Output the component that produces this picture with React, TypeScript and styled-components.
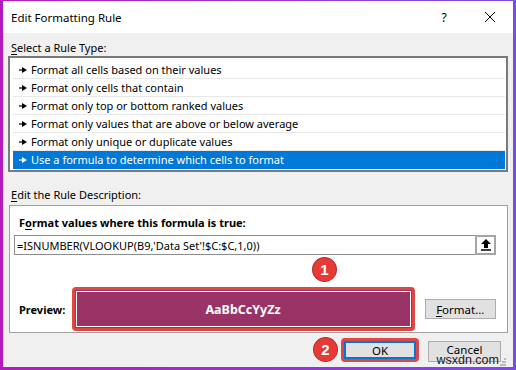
import React from "react";
import styled, { createGlobalStyle } from "styled-components";

const GlobalStyle = createGlobalStyle`
  html, body {
    margin: 0;
    padding: 0;
  }
  body {
    width: 516px;
    height: 370px;
    overflow: hidden;
    font-family: "Segoe UI", "Noto Sans", sans-serif;
    font-size: 11px;
    color: #000;
  }
`;

const Frame = styled.div`
  width: 516px;
  height: 370px;
  box-sizing: border-box;
  padding: 1px 3px 3px 3px;
  background: linear-gradient(90deg, #b41bbb 0%, #9c31cf 50%, #7b4be6 100%);
  display: flex;
`;

const Dialog = styled.div`
  flex: 1;
  display: flex;
  flex-direction: column;
  background: #f0f0f0;
  position: relative;
  overflow: hidden;
`;

const TitleBar = styled.div`
  height: 32px;
  background: #fff;
  display: flex;
  align-items: center;
  padding-left: 8px;
`;

const Title = styled.div`
  flex: 1;
  font-size: 11.5px;
`;

const CaptionButton = styled.div`
  width: 46px;
  height: 32px;
  display: flex;
  align-items: center;
  justify-content: center;
  font-size: 12px;
`;

const Body = styled.div`
  display: flex;
  flex-direction: column;
  padding: 0 5px;
`;

const SectionLabel = styled.div<{ $top: number }>`
  margin-top: ${(p) => p.$top}px;
  line-height: 15px;
  padding-left: 3px;
  u {
    text-decoration: underline;
    text-underline-offset: 2px;
  }
`;

const ListBox = styled.div`
  margin-top: 1px;
  border: 2px solid #7a7a7a;
  background: #fff;
  padding: 3px 1px 1px 3px;
  display: flex;
  flex-direction: column;
`;

const Row = styled.div<{ $selected?: boolean }>`
  height: 18px;
  box-sizing: border-box;
  display: flex;
  align-items: center;
  gap: 4px;
  padding-left: 6px;
  border-bottom: 1px solid ${(p) => (p.$selected ? "#0078d7" : "#e8e8e8")};
  background: ${(p) => (p.$selected ? "#0078d7" : "transparent")};
  color: ${(p) => (p.$selected ? "#fff" : "#000")};
  white-space: nowrap;
`;

const DescBox = styled.div`
  margin: 3px 0 0 1px;
  height: 128px;
  box-sizing: border-box;
  border: 1px solid #a0a0a0;
  background: #fff;
  padding: 9px 11px 0 4px;
  display: flex;
  flex-direction: column;
`;

const Heading = styled.div`
  font-weight: bold;
  line-height: 15px;
  padding-left: 5px;
  u {
    text-decoration: underline;
    text-underline-offset: 2px;
  }
`;

const FormulaRow = styled.div`
  margin-top: 5px;
  display: flex;
  height: 20px;
`;

const FormulaInput = styled.div`
  flex: 1;
  box-sizing: border-box;
  border: 1px solid #8c8c8c;
  border-right: none;
  padding-left: 2px;
  display: flex;
  align-items: center;
  white-space: nowrap;
`;

const CollapseButton = styled.div`
  width: 21px;
  box-sizing: border-box;
  border: 2px solid #a6a6a6;
  background: #fdfdfd;
  display: flex;
  align-items: center;
  justify-content: center;
`;

const PreviewRow = styled.div`
  margin-top: 32px;
  display: flex;
  align-items: center;
`;

const PreviewLabel = styled.div`
  width: 58px;
  box-sizing: border-box;
  padding-left: 5px;
  font-weight: bold;
`;

const Highlight = styled.div`
  border: 3px solid #de4744;
  border-radius: 4px;
  display: flex;
`;

const Swatch = styled.div`
  width: 335px;
  height: 36px;
  box-sizing: border-box;
  border: 1px solid #fff;
  outline: 1px solid #993366;
  margin: 1px;
  background: #993366;
  color: #fff;
  font-weight: bold;
  font-size: 12.5px;
  display: flex;
  align-items: center;
  justify-content: center;
`;

const Button = styled.div<{ $default?: boolean; $width: number; $height: number }>`
  width: ${(p) => p.$width}px;
  height: ${(p) => p.$height}px;
  box-sizing: border-box;
  border: ${(p) => (p.$default ? "2px solid #0078d7" : "1px solid #adadad")};
  background: #e1e1e1;
  display: flex;
  align-items: center;
  justify-content: center;
  font-size: 11.5px;
  u {
    text-decoration: underline;
    text-underline-offset: 2px;
  }
`;

const FormatButton = styled(Button)`
  margin-left: 10px;
`;

const Footer = styled.div`
  margin-top: 5px;
  display: flex;
  justify-content: flex-end;
  align-items: flex-start;
  gap: 9px;
  padding-right: 7px;
`;

const CancelButton = styled(Button)`
  margin-top: 3px;
  align-items: flex-start;
  line-height: 14px;
  padding-top: 1px;
`;

const Badge = styled.div<{ $left: number; $top: number }>`
  position: absolute;
  left: ${(p) => p.$left}px;
  top: ${(p) => p.$top}px;
  width: 23px;
  height: 23px;
  border-radius: 50%;
  background: #e53a36;
  box-shadow: 0 0 0 1px #b92a27;
  color: #fff;
  font-family: "Liberation Sans", Arial, sans-serif;
  font-weight: bold;
  font-size: 15px;
  display: flex;
  align-items: center;
  justify-content: center;
`;

const Watermark = styled.div`
  position: absolute;
  right: 7px;
  bottom: 1px;
  font-family: "Liberation Sans", Arial, sans-serif;
  font-size: 12.5px;
  line-height: 12px;
  color: #1c1c1c;
  display: flex;
  align-items: flex-end;
  gap: 1px;
`;

const Bullet = () => (
  <svg width="8" height="6" viewBox="0 0 8 6">
    <path d="M0 3H4" stroke="currentColor" strokeWidth="1.2" />
    <path d="M3 0L8 3L3 6Z" fill="currentColor" />
  </svg>
);

const UpArrow = () => (
  <svg width="10" height="12" viewBox="0 0 10 12">
    <path d="M5 0L10 5H7V9H3V5H0Z" fill="#000" />
    <path d="M0 11H10" stroke="#000" strokeWidth="1.5" />
  </svg>
);

const CloseIcon = () => (
  <svg width="10" height="10" viewBox="0 0 10 10">
    <path d="M0 0L10 10M10 0L0 10" stroke="#000" strokeWidth="1" />
  </svg>
);

const Grip = () => (
  <svg width="6" height="8" viewBox="0 0 6 8">
    <rect x="4" y="0" width="2" height="2" fill="#b9b9b9" />
    <rect x="2" y="3" width="2" height="2" fill="#b9b9b9" />
    <rect x="4" y="3" width="2" height="2" fill="#b9b9b9" />
    <rect x="0" y="6" width="2" height="2" fill="#b9b9b9" />
    <rect x="2" y="6" width="2" height="2" fill="#b9b9b9" />
    <rect x="4" y="6" width="2" height="2" fill="#b9b9b9" />
  </svg>
);

const ruleTypes = [
  "Format all cells based on their values",
  "Format only cells that contain",
  "Format only top or bottom ranked values",
  "Format only values that are above or below average",
  "Format only unique or duplicate values",
  "Use a formula to determine which cells to format",
];

export default function App() {
  return (
    <>
      <GlobalStyle />
      <Frame>
        <Dialog>
          <TitleBar>
            <Title>Edit Formatting Rule</Title>
            <CaptionButton>?</CaptionButton>
            <CaptionButton>
              <CloseIcon />
            </CaptionButton>
          </TitleBar>
          <Body>
            <SectionLabel $top={7}>
              <u>S</u>elect a Rule Type:
            </SectionLabel>
            <ListBox>
              {ruleTypes.map((r, i) => (
                <Row key={r} $selected={i === ruleTypes.length - 1}>
                  <Bullet />
                  {r}
                </Row>
              ))}
            </ListBox>
            <SectionLabel $top={15}>
              <u>E</u>dit the Rule Description:
            </SectionLabel>
            <DescBox>
              <Heading>
                F<u>o</u>rmat values where this formula is true:
              </Heading>
              <FormulaRow>
                <FormulaInput>=ISNUMBER(VLOOKUP(B9,'Data Set'!$C:$C,1,0))</FormulaInput>
                <CollapseButton>
                  <UpArrow />
                </CollapseButton>
              </FormulaRow>
              <PreviewRow>
                <PreviewLabel>Preview:</PreviewLabel>
                <Highlight>
                  <Swatch>AaBbCcYyZz</Swatch>
                </Highlight>
                <FormatButton $width={72} $height={20}>
                  <u>F</u>ormat...
                </FormatButton>
              </PreviewRow>
            </DescBox>
            <Footer>
              <Highlight>
                <Button $default $width={72} $height={18}>
                  OK
                </Button>
              </Highlight>
              <CancelButton $width={73} $height={21}>
                Cancel
              </CancelButton>
            </Footer>
          </Body>
          <Badge $left={310} $top={257}>1</Badge>
          <Badge $left={311} $top={337}>2</Badge>
          <Watermark>
            wsxdn.com
            <Grip />
          </Watermark>
        </Dialog>
      </Frame>
    </>
  );
}
